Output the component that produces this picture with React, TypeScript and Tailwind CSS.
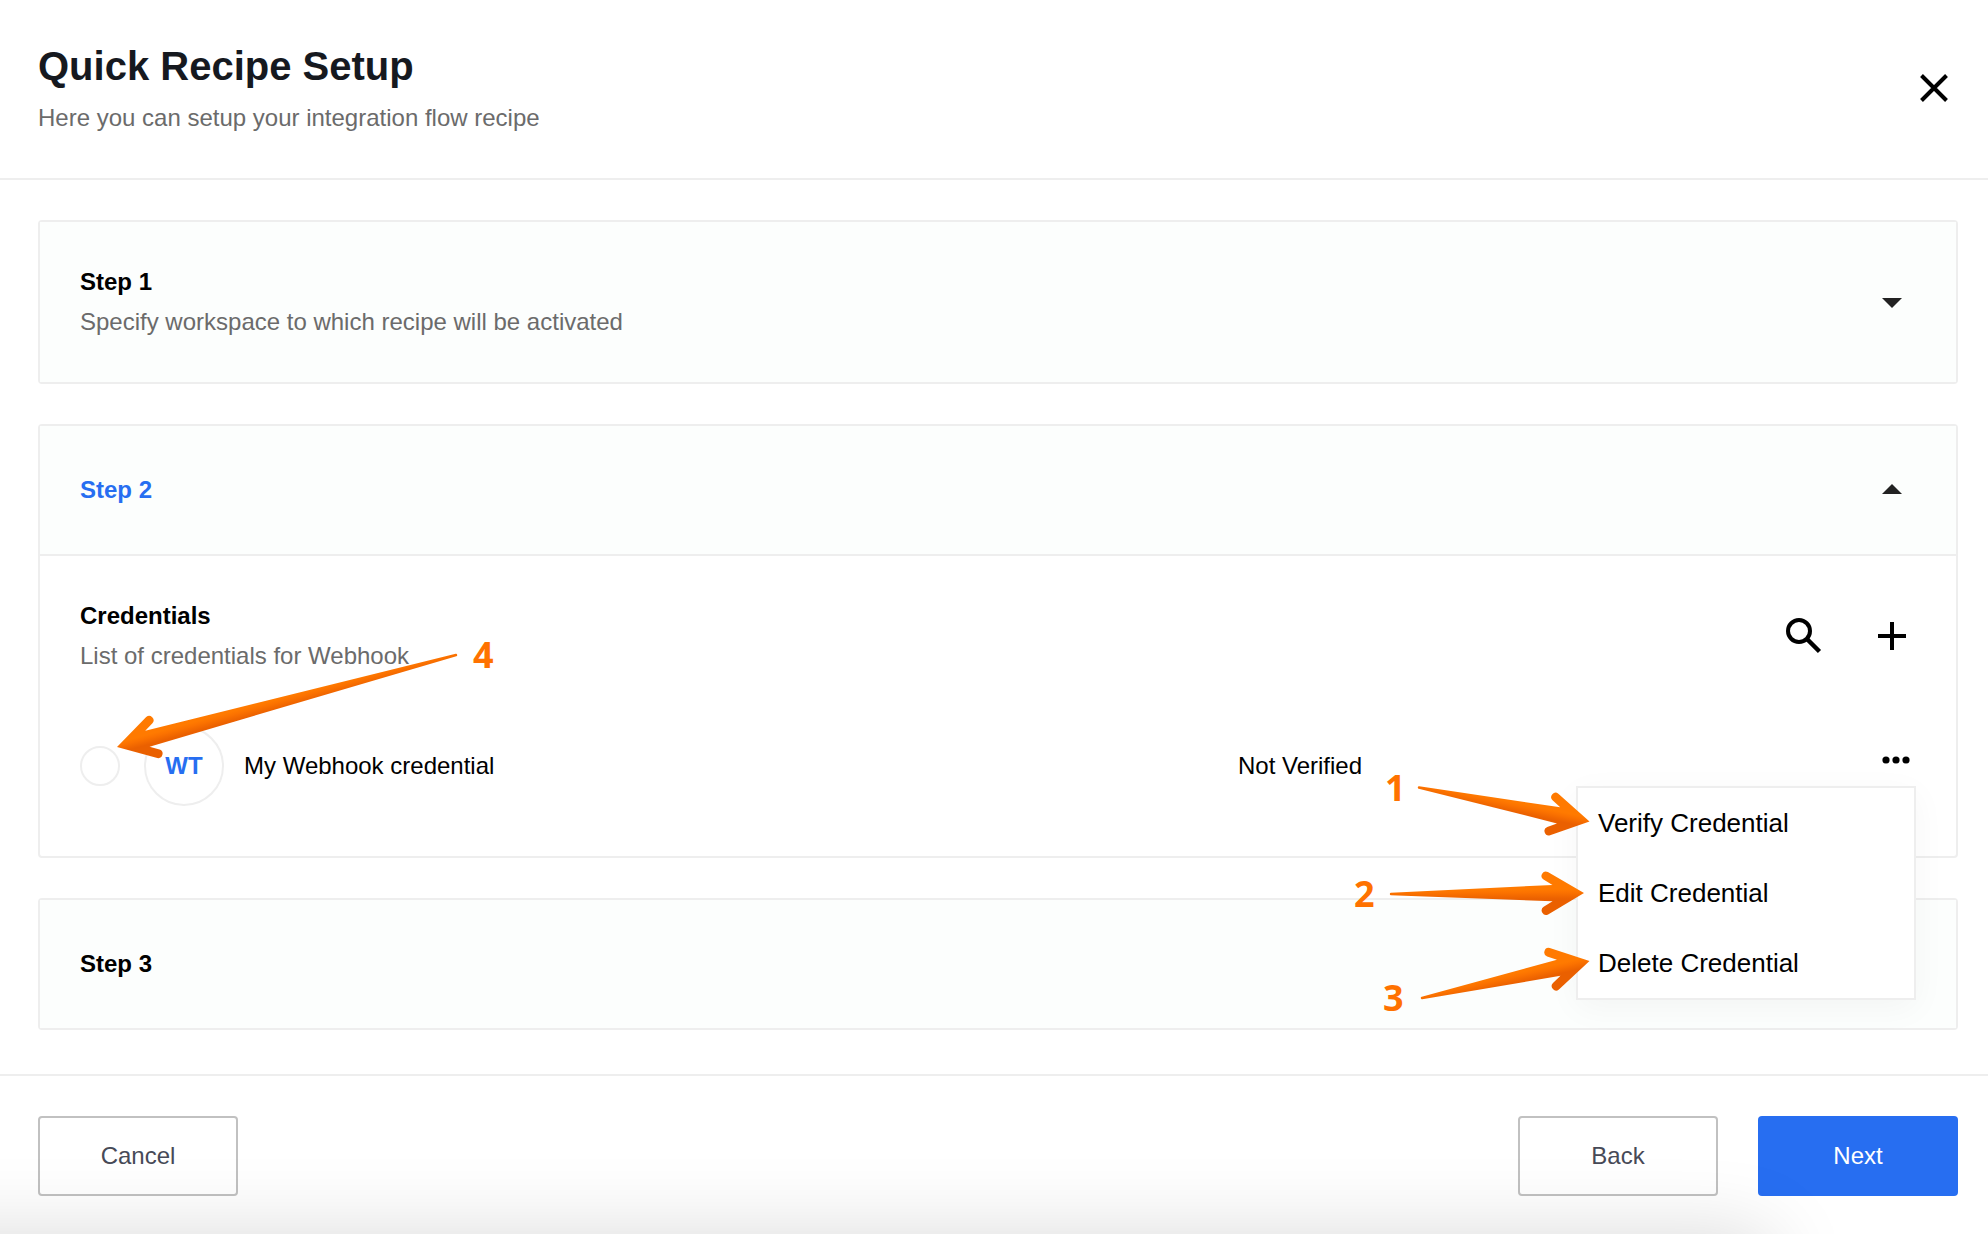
import React, { useState } from "react";

type Point = [number, number];

function Arrow({ id, tail, tip }: { id: string; tail: Point; tip: Point }) {
  const dx = tip[0] - tail[0];
  const dy = tip[1] - tail[1];
  const length = Math.hypot(dx, dy);
  const angle = (Math.atan2(dy, dx) * 180) / Math.PI;
  const flip = dx < 0 ? -1 : 1;
  return (
    <g transform={`translate(${tip[0]} ${tip[1]}) rotate(${angle}) scale(1 ${flip})`}>
      <defs>
        <linearGradient id={id} gradientUnits="userSpaceOnUse" x1="0" y1="-4" x2="0" y2="7">
          <stop offset="0" stopColor="#ff7a00" />
          <stop offset="0.3" stopColor="#fb7200" />
          <stop offset="0.9" stopColor="#ea6000" />
          <stop offset="1" stopColor="#ea6000" />
        </linearGradient>
      </defs>
      <path
        fill={`url(#${id})`}
        d={`M0 0 L-36 -21.2 A4.4 4.4 0 0 0 -40.4 -13.6 L-31.5 -8.2 L${-length} -1.2 A1.2 1.2 0 0 0 ${-length} 1.2 L-31.5 8.2 L-40.4 13.6 A4.4 4.4 0 0 0 -36 21.2 Z`}
      />
    </g>
  );
}

function Caret({ up = false }: { up?: boolean }) {
  return (
    <svg width="48" height="20" viewBox="0 0 48 20" fill="#222222" aria-hidden="true">
      <path d={up ? "M14 14h20L24 4z" : "M14 6h20L24 16z"} />
    </svg>
  );
}

function Step({
  title,
  description,
  open = false,
  children,
}: {
  title: string;
  description?: string;
  open?: boolean;
  children?: React.ReactNode;
}) {
  return (
    <section className="rounded border-2 border-[#eeeeee] bg-white">
      <button
        type="button"
        aria-expanded={open}
        className={`flex w-full items-center justify-between bg-[#fcfefd] px-10 text-left ${
          description ? "py-10" : "py-11"
        } ${open ? "border-b-2 border-[#eeeeee]" : ""}`}
      >
        <span className="flex flex-col text-2xl/10">
          <span className={open ? "font-bold text-[#276ef1]" : "font-bold text-black"}>{title}</span>
          {description && <span className="text-[#6b6b6b]">{description}</span>}
        </span>
        {(open || description) && <Caret up={open} />}
      </button>
      {children}
    </section>
  );
}

const actions = ["Verify Credential", "Edit Credential", "Delete Credential"];

function ActionMenu() {
  return (
    <div className="absolute top-10 right-0 z-10 w-[340px]">
      <ul
        role="menu"
        className="border-2 border-[#eeeeee] bg-white shadow-[0_8px_32px_rgba(0,0,0,0.04)]"
      >
        {actions.map((action) => (
          <li key={action} role="none">
            <button
              type="button"
              role="menuitem"
              className="block w-full px-5 text-left text-[26px]/[70px] text-black"
            >
              {action}
            </button>
          </li>
        ))}
      </ul>
      <svg
        className="pointer-events-none absolute -top-[46px] -left-[236px] overflow-visible font-['Open_Sans',sans-serif] text-4xl font-bold"
        width="256"
        height="320"
        viewBox="0 -40 256 320"
      >
        <g fill="#ff7200">
          <text x="45" y="21">1</text>
          <text x="14" y="127">2</text>
          <text x="43" y="231">3</text>
        </g>
        <Arrow id="arrow-verify" tail={[79, 7.5]} tip={[249.5, 41.5]} />
        <Arrow id="arrow-edit" tail={[51, 114]} tip={[244, 113]} />
        <Arrow id="arrow-delete" tail={[82, 218]} tip={[249.5, 181]} />
      </svg>
    </div>
  );
}

export default function App() {
  const [selected, setSelected] = useState(false);
  return (
    <div className="relative flex min-h-screen flex-col overflow-hidden bg-white font-['Liberation_Sans',Arial,sans-serif]">
      <header className="flex items-center justify-between border-b-2 border-[#eeeeee] pt-[42px] pr-[30px] pb-10 pl-[38px]">
        <div>
          <h1 className="text-[40px]/12 font-bold text-[#16191f]">Quick Recipe Setup</h1>
          <p className="mt-2 text-2xl/10 text-[#6b6b6b]">Here you can setup your integration flow recipe</p>
        </div>
        <button type="button" aria-label="Close" className="mb-1 p-2">
          <svg width="32" height="32" viewBox="0 0 32 32" fill="none" stroke="#000" strokeWidth="4">
            <path d="M3.5 3.5l25 25M28.5 3.5l-25 25" />
          </svg>
        </button>
      </header>

      <main className="flex grow flex-col gap-10 pt-10 pr-[30px] pb-11 pl-[38px]">
        <Step title="Step 1" description="Specify workspace to which recipe will be activated" />

        <Step title="Step 2" open>
          <div className="px-10 pt-10 pb-[50px]">
            <div className="flex items-center justify-between">
              <div className="text-2xl/10">
                <h2 className="font-bold text-black">Credentials</h2>
                <p className="text-[#6b6b6b]">List of credentials for Webhook</p>
              </div>
              <div className="flex gap-10">
                <button type="button" aria-label="Search credentials" className="p-1">
                  <svg width="40" height="40" viewBox="0 0 40 40" fill="none" stroke="#000" strokeWidth="4">
                    <circle cx="15" cy="15" r="11" />
                    <path d="M23 23L35.5 35.5" strokeWidth="4.5" />
                  </svg>
                </button>
                <button type="button" aria-label="Add credential" className="p-1">
                  <svg width="40" height="40" viewBox="0 0 40 40" fill="none" stroke="#000" strokeWidth="4">
                    <path d="M20 6v28M6 20h28" />
                  </svg>
                </button>
              </div>
            </div>

            <ul className="mt-[50px]">
              <li className="relative flex items-center text-2xl/10 text-black">
                <label className="flex grow items-center">
                  <input
                    type="radio"
                    name="credential"
                    checked={selected}
                    onChange={() => setSelected(true)}
                    className="size-10 appearance-none rounded-full border-2 border-[#eeeeee] bg-white checked:border-[#276ef1]"
                  />
                  <span className="ml-6 flex size-20 items-center justify-center rounded-full border-2 border-[#eeeeee] font-bold text-[#276ef1]">
                    WT
                  </span>
                  <span className="ml-5">My Webhook credential</span>
                </label>
                <span className="w-[638px]">Not Verified</span>
                <div className="relative mb-3">
                  <button
                    type="button"
                    aria-label="Credential actions"
                    aria-haspopup="menu"
                    className="flex h-7 w-10 items-center justify-center"
                  >
                    <svg width="28" height="8" viewBox="0 0 28 8" fill="#000">
                      <circle cx="4" cy="4" r="3.6" />
                      <circle cx="14" cy="4" r="3.6" />
                      <circle cx="24" cy="4" r="3.6" />
                    </svg>
                  </button>
                  <ActionMenu />
                </div>
                <svg
                  className="pointer-events-none absolute -top-[126px] left-[30px] overflow-visible font-['Open_Sans',sans-serif] text-4xl font-bold"
                  width="400"
                  height="176"
                  viewBox="0 -40 400 176"
                >
                  <text x="363" y="28" fill="#ff7200">4</text>
                  <Arrow id="arrow-select" tail={[346, 15]} tip={[7, 107]} />
                </svg>
              </li>
            </ul>
          </div>
        </Step>

        <Step title="Step 3" />
      </main>

      <footer className="flex items-center border-t-2 border-[#eeeeee] pt-10 pr-[30px] pb-[38px] pl-[38px] text-2xl text-[#474a57]">
        <button type="button" className="h-20 w-[200px] rounded border-2 border-[#c1c1c1]">
          Cancel
        </button>
        <button type="button" className="ml-auto h-20 w-[200px] rounded border-2 border-[#c1c1c1]">
          Back
        </button>
        <button type="button" className="ml-10 h-20 w-[200px] rounded bg-[#276ef1] text-white">
          Next
        </button>
      </footer>

      <div className="pointer-events-none absolute top-full right-[218px] -left-24 h-60 shadow-[0_0_80px_rgba(0,0,0,0.15)]" />
    </div>
  );
}
